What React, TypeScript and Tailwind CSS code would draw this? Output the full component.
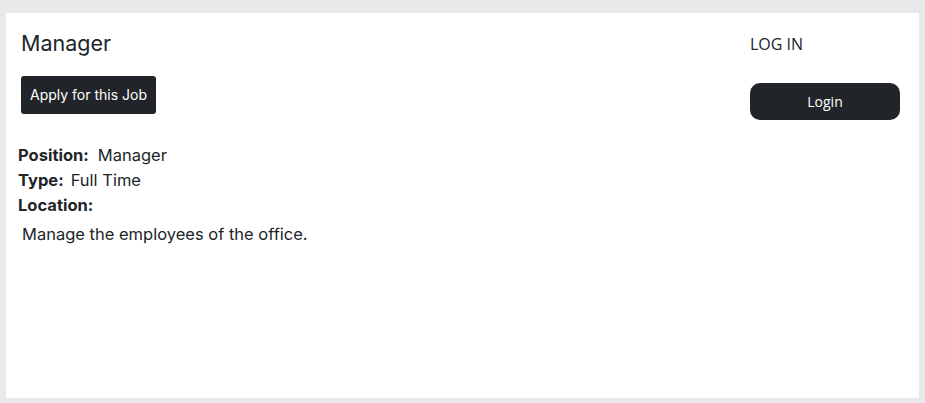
export default function App() {
  return (
    <div className="min-h-screen bg-[#e9e9e9] px-[6px] pt-[13px] pb-[5px]">
      <div className="flex h-[385px] justify-between bg-white text-[#212529]">
        <div className="pl-[12px] pt-[18px] font-['Inter',sans-serif]">
          <h1 className="ml-[3px] text-[21.5px] leading-[25px] font-normal">Manager</h1>
          <button className="mt-[20px] ml-[3px] rounded-[3px] bg-[#212529] px-[9px] py-[9px] text-[14px] leading-[20px] text-white">
            Apply for this Job
          </button>
          <div className="mt-[29px] text-[16.5px] leading-[25px]">
            <p>
              <span className="font-bold">Position:</span>
              <span className="ml-[9px]">Manager</span>
            </p>
            <p>
              <span className="font-bold">Type:</span>
              <span className="ml-[7px]">Full Time</span>
            </p>
            <p>
              <span className="font-bold">Location:</span>
            </p>
            <p className="mt-[4px] pl-[4px]">Manage the employees of the office.</p>
          </div>
        </div>
        <div className="w-[150px] mr-[19px] pt-[19px] font-['Open_Sans',sans-serif]">
          <div className="text-[16px] leading-[24px]">LOG IN</div>
          <button className="mt-[27px] h-[37px] w-full rounded-[10px] bg-[#212529] text-[14px] text-white">
            Login
          </button>
        </div>
      </div>
    </div>
  );
}
